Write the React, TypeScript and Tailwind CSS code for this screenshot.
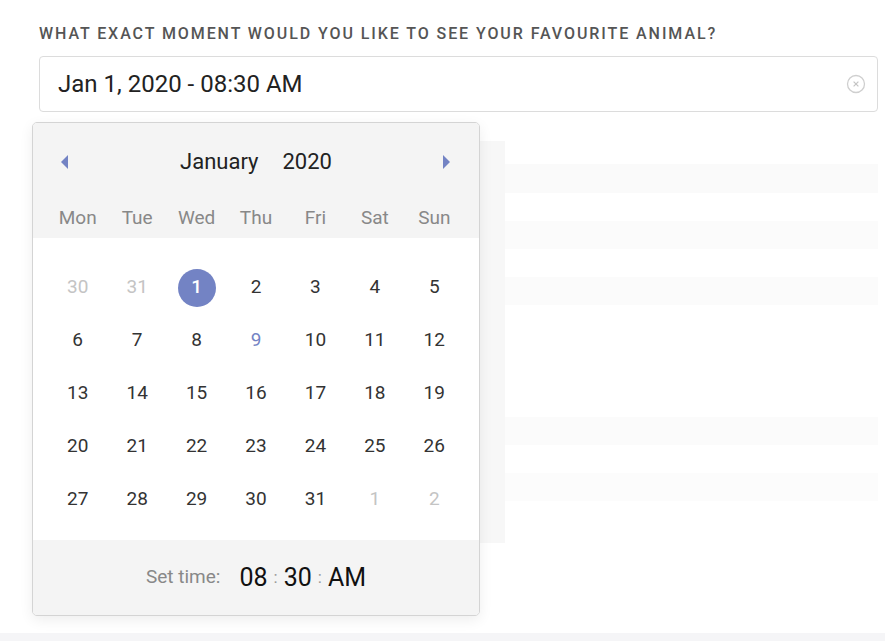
import React from "react";

const weeks: { d: number; muted?: boolean; sel?: boolean; today?: boolean }[][] = [
  [{ d: 30, muted: true }, { d: 31, muted: true }, { d: 1, sel: true }, { d: 2 }, { d: 3 }, { d: 4 }, { d: 5 }],
  [{ d: 6 }, { d: 7 }, { d: 8 }, { d: 9, today: true }, { d: 10 }, { d: 11 }, { d: 12 }],
  [{ d: 13 }, { d: 14 }, { d: 15 }, { d: 16 }, { d: 17 }, { d: 18 }, { d: 19 }],
  [{ d: 20 }, { d: 21 }, { d: 22 }, { d: 23 }, { d: 24 }, { d: 25 }, { d: 26 }],
  [{ d: 27 }, { d: 28 }, { d: 29 }, { d: 30 }, { d: 31 }, { d: 1, muted: true }, { d: 2, muted: true }],
];

const days = ["Mon", "Tue", "Wed", "Thu", "Fri", "Sat", "Sun"];

export default function App() {
  return (
    <div className="h-[641px] w-[885px] overflow-hidden bg-white flex flex-col font-['Roboto',sans-serif]">
      <div className="flex-1 pl-[39px] pr-[7px] pt-[24px]">
        <div className="text-[16px] leading-[20px] tracking-[0.12em] text-[#555] font-medium">
          WHAT EXACT MOMENT WOULD YOU LIKE TO SEE YOUR FAVOURITE ANIMAL?
        </div>
        <div className="relative mt-[12px]">
          <div className="h-[56px] rounded-[4px] border border-[#dcdcdc] flex items-center pl-[18px] pr-[11px]">
            <span className="flex-1 text-[24px] text-[#222]">Jan 1, 2020 - 08:30 AM</span>
            <svg width="20" height="20" viewBox="0 0 20 20">
              <circle cx="10" cy="10" r="8.5" fill="none" stroke="#cfcfcf" strokeWidth="1.3" />
              <path d="M7.6 7.6 L12.4 12.4 M12.4 7.6 L7.6 12.4" stroke="#c4c4c4" strokeWidth="1.2" />
            </svg>
          </div>

          {/* faint background content behind the popup */}
          <div className="mt-[29px] flex">
            <div className="w-[466px] h-[402px] bg-[#f7f7f7]" />
            <div className="flex-1 pt-[23px] flex flex-col">
              <div className="h-[29px] bg-[#fafafa]" />
              <div className="h-[28px]" />
              <div className="h-[28px] bg-[#fbfbfb]" />
              <div className="h-[28px]" />
              <div className="h-[28px] bg-[#fbfbfb]" />
              <div className="h-[112px]" />
              <div className="h-[28px] bg-[#fbfbfb]" />
              <div className="h-[28px]" />
              <div className="h-[28px] bg-[#fcfcfc]" />
            </div>
          </div>

          {/* popup */}
          <div className="absolute left-[-7px] top-[66px] w-[448px] h-[494px] rounded-[5px] border border-[#d4d4d4] bg-white shadow-[0_4px_14px_rgba(0,0,0,0.07)] overflow-hidden flex flex-col">
            <div className="bg-[#f4f4f4] pt-[20px]">
              <div className="h-[37px] flex items-center px-[28px]">
                <svg width="8" height="14" viewBox="0 0 8 14">
                  <path d="M7 0 L0 7 L7 14 Z" fill="#7383c4" />
                </svg>
                <div className="flex-1 text-center text-[22px] text-[#222]">
                  January<span className="inline-block w-[24px]" />2020
                </div>
                <svg width="8" height="14" viewBox="0 0 8 14">
                  <path d="M0 0 L7 7 L0 14 Z" fill="#7383c4" />
                </svg>
              </div>
              <div className="h-[40px] grid grid-cols-7 px-[15px] items-center mt-[18px] pt-[1px]">
                {days.map((d) => (
                  <div key={d} className="text-center text-[19px] text-[#888]">
                    {d}
                  </div>
                ))}
              </div>
            </div>
            <div className="pt-[23px] pb-[14px] px-[15px]">
              {weeks.map((w, i) => (
                <div key={i} className="grid grid-cols-7 h-[53px] items-center">
                  {w.map((c, j) => (
                    <div key={j} className="flex justify-center">
                      {c.sel ? (
                        <div className="w-[38px] h-[38px] rounded-full bg-[#7383c4] text-white flex items-center justify-center text-[19px] font-medium">
                          {c.d}
                        </div>
                      ) : (
                        <span
                          className={
                            "text-[19px] " +
                            (c.muted ? "text-[#c4c4c4]" : c.today ? "text-[#7383c4]" : "text-[#333]")
                          }
                        >
                          {c.d}
                        </span>
                      )}
                    </div>
                  ))}
                </div>
              ))}
            </div>
            <div className="flex-1 bg-[#f4f4f4] flex items-center justify-center">
              <span className="text-[19px] text-[#888] mr-[19px]">Set time:</span>
              <span className="text-[25px] text-[#111]">08</span>
              <span className="text-[17px] text-[#999] mx-[6px]">:</span>
              <span className="text-[25px] text-[#111]">30</span>
              <span className="text-[17px] text-[#999] mx-[6px]">:</span>
              <span className="text-[25px] text-[#111]">AM</span>
            </div>
          </div>
        </div>
      </div>
      <div className="h-[8px] bg-[#f5f5f7]" />
    </div>
  );
}
